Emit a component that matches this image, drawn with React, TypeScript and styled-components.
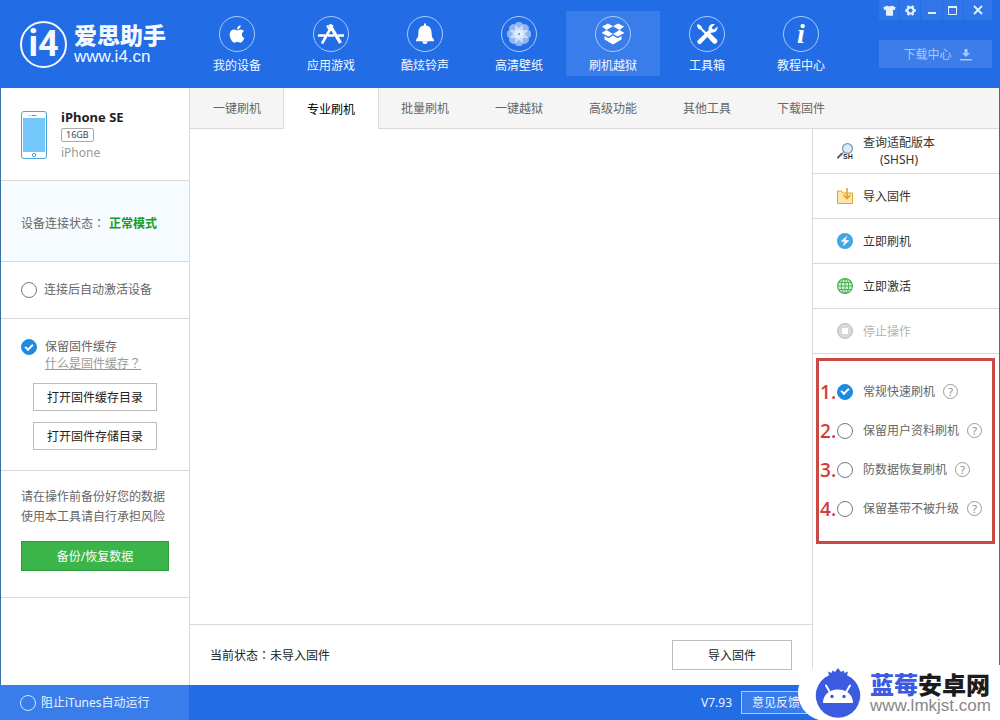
import React, { useState } from "react";
import styled, { createGlobalStyle, css } from "styled-components";
import { FaApple } from "react-icons/fa";

const uiFont = '"Noto Sans", "Noto Sans CJK SC", sans-serif';
const line = "#d9d9d9";
const brand = "#226ce6";

const GlobalStyle = createGlobalStyle`
  *, *::before, *::after { box-sizing: border-box; }
  body { margin: 0; font: 12px/16px ${uiFont}; color: #666; background: #fff; }
  button, input { font: inherit; color: inherit; margin: 0; padding: 0; }
  button { cursor: pointer; border: 0; background: none; }
  h1, p, fieldset { margin: 0; padding: 0; }
  svg { display: block; }
`;

const Window = styled.div`
  position: relative;
  min-height: 100vh;
  display: flex;
  flex-direction: column;
  overflow: hidden;
`;

/* Full-width punctuation set in the middle of its square */
const Punct = styled.span`
  font-family: "Noto Sans CJK TC", sans-serif;
`;

/* ---------- header ---------- */

const Header = styled.header`
  display: flex;
  align-items: flex-start;
  height: 88px;
  background: ${brand};
  color: #f4f9ff;
`;

const Brand = styled.div`
  display: flex;
  align-items: center;
  gap: 7px;
  flex: 0 0 190px;
  height: 88px;
  padding-left: 20px;
`;

const Emblem = styled.span`
  display: flex;
  align-items: center;
  justify-content: center;
  width: 47px;
  height: 47px;
  border: 2px solid #f4f9ff;
  border-radius: 50%;
  font: 700 36px/40px "Liberation Sans Narrow", Roboto, sans-serif;
`;

const BrandText = styled.div`
  display: flex;
  flex-direction: column;
  gap: 2px;
`;

const BrandName = styled.h1`
  font: 900 23px/24px "Noto Sans CJK SC", sans-serif;
`;

const BrandUrl = styled.p`
  font: 17px/18px "Liberation Sans", sans-serif;
`;

const Nav = styled.nav`
  display: flex;
  padding-top: 11px;
`;

const NavButton = styled.button<{ $active?: boolean }>`
  display: flex;
  flex-direction: column;
  align-items: center;
  gap: 6px;
  width: 94px;
  height: 65px;
  padding-top: 5px;
  background: ${(p) => (p.$active ? "#397dea" : "transparent")};
`;

const NavIcon = styled.span`
  display: flex;
  align-items: center;
  justify-content: center;
  width: 36px;
  height: 36px;
  border: 1px solid #a9cbfa;
  border-radius: 50%;
  color: #fff;
`;

const InfoMark = styled.span`
  font: italic 700 28px/28px "Liberation Serif", serif;
`;

const HeaderSide = styled.div`
  display: flex;
  flex-direction: column;
  gap: 20px;
  width: 113px;
  margin: 0 8px 0 auto;
`;

const WindowButtons = styled.div`
  display: flex;
  gap: 1px;
  height: 20px;
`;

const WindowButton = styled.button`
  display: flex;
  flex: 1 0 20px;
  align-items: center;
  justify-content: center;
  background: #3076e8;
  color: #e6f1ff;
  &:last-child { flex-basis: 28px; }
`;

const DownloadButton = styled.button`
  display: flex;
  align-items: center;
  justify-content: center;
  gap: 8px;
  height: 28px;
  padding: 2px 0 0 4px;
  background: #3c7de9;
  color: #a9c9f8;
`;

/* ---------- body ---------- */

const Body = styled.div`
  display: flex;
  flex: 1;
  border: solid #3a6ea8;
  border-width: 0 1px;
`;

const Sidebar = styled.aside`
  flex: 0 0 189px;
  border-right: 1px solid ${line};
`;

const Section = styled.section<{ $height: number; $tinted?: boolean; $top?: number; $bottom?: number }>`
  display: flex;
  flex-direction: column;
  justify-content: center;
  min-height: ${(p) => p.$height}px;
  padding: ${(p) => p.$top ?? 0}px 20px ${(p) => p.$bottom ?? 0}px;
  border-bottom: 1px solid ${line};
  background: ${(p) => (p.$tinted ? "#f5fbff" : "#fff")};
`;

const Device = styled.div`
  display: flex;
  align-items: center;
  gap: 14px;
`;

const DeviceInfo = styled.div`
  display: flex;
  flex-direction: column;
  align-items: flex-start;
  gap: 3px;
`;

const DeviceName = styled.strong`
  color: #222;
  font-size: 13px;
`;

const Capacity = styled.span`
  padding: 0 4px;
  border: 1px solid #aaa;
  border-radius: 2px;
  font-size: 9px;
  line-height: 12px;
  color: #444;
`;

const Muted = styled.span`
  color: #999;
`;

const Mode = styled.strong`
  margin-left: 4px;
  color: #159a2b;
`;

const Choice = styled.label<{ $gap?: number }>`
  display: flex;
  align-items: center;
  gap: ${(p) => p.$gap ?? 7}px;
  cursor: pointer;
`;

const Tick = styled.input<{ $onBlue?: boolean }>`
  appearance: none;
  display: grid;
  place-content: center;
  flex: none;
  width: 16px;
  height: 16px;
  border: 1px solid ${(p) => (p.$onBlue ? "#d5e6ff" : "#777")};
  border-radius: 50%;
  &:checked {
    border-color: #1f8ae0;
    background: #1f8ae0;
  }
  &:checked::after {
    content: "";
    width: 8px;
    height: 5px;
    margin-bottom: 2px;
    border: solid #fff;
    border-width: 0 0 2px 2px;
    transform: rotate(-45deg);
  }
`;

const HelpLink = styled.a`
  align-self: flex-start;
  margin-left: 24px;
  color: #999;
`;

const ButtonStack = styled.div`
  display: flex;
  flex-direction: column;
  gap: 11px;
  padding: 11px 12px 0;
`;

const OutlineButton = styled.button<{ $wide?: boolean }>`
  height: ${(p) => (p.$wide ? 30 : 28)}px;
  width: ${(p) => (p.$wide ? "120px" : "100%")};
  padding-top: 2px;
  border: 1px solid #bcbcbc;
  background: #fff;
  color: #222;
`;

const Notice = styled.p`
  line-height: 20px;
  white-space: nowrap;
`;

const GreenButton = styled.button`
  height: 30px;
  margin-top: 14px;
  padding-top: 2px;
  border: 1px solid #2f9e3d;
  background: #3bb54a;
  color: #fff;
`;

const Content = styled.div`
  display: flex;
  flex: 1;
  flex-direction: column;
  min-width: 0;
`;

const Tabs = styled.div`
  display: flex;
  height: 41px;
  border-bottom: 1px solid ${line};
  background: #f5f5f5;
`;

const Tab = styled.button<{ $active?: boolean }>`
  width: 94px;
  height: 40px;
  padding-top: 2px;
  ${(p) =>
    p.$active &&
    css`
      width: 96px;
      height: 41px;
      margin: 0 -1px;
      border: solid ${line};
      border-width: 0 1px;
      background: #fff;
      color: #000;
    `}
`;

const Workspace = styled.div`
  display: flex;
  flex: 1;
`;

const Main = styled.main`
  display: flex;
  flex: 1;
  flex-direction: column;
  justify-content: flex-end;
`;

const StatusBar = styled.div`
  display: flex;
  align-items: center;
  justify-content: space-between;
  height: 61px;
  padding: 0 20px;
  border-top: 1px solid ${line};
  color: #222;
`;

const Tools = styled.aside`
  flex: 0 0 187px;
  border-left: 1px solid ${line};
`;

const ToolButton = styled.button`
  display: flex;
  align-items: center;
  gap: 10px;
  width: 100%;
  height: 45px;
  padding-left: 24px;
  border-bottom: 1px solid ${line};
  color: #333;
  line-height: 17px;
  &:disabled { color: #b5b5b5; }
  svg { flex: none; }
`;

const Modes = styled.fieldset`
  margin: 4px 4px 0 3px;
  padding: 11px 0 13px 1px;
  border: 3px solid #c94a45;
`;

const ModeRow = styled.div`
  display: flex;
  align-items: center;
  height: 39px;
`;

const Step = styled.span`
  width: 17px;
  color: #d63a40;
  font: 600 19px/20px "Open Sans", sans-serif;
`;

const HelpButton = styled.button`
  display: flex;
  align-items: center;
  justify-content: center;
  width: 15px;
  height: 15px;
  margin-left: 8px;
  border: 1px solid #999;
  border-radius: 50%;
  color: #888;
  font-size: 11px;
  line-height: 13px;
`;

/* ---------- footer ---------- */

const Footer = styled.footer`
  display: flex;
  height: 35px;
  background: ${brand};
  color: #eaf3ff;
`;

const FooterSide = styled.div`
  display: flex;
  flex: 0 0 189px;
  align-items: center;
  padding-left: 20px;
  background: #397dea;
`;

const FooterMain = styled.div`
  display: flex;
  flex: 1;
  align-items: center;
  justify-content: flex-end;
  gap: 9px;
  padding-right: 189px;
`;

const FeedbackButton = styled.button`
  width: 70px;
  height: 23px;
  border: 1px solid #a9cbfa;
  background: #397dea;
`;

const Watermark = styled.div`
  position: absolute;
  right: 0;
  bottom: -1px;
  display: flex;
  align-items: center;
  gap: 9px;
  width: 202px;
  height: 56px;
  padding-left: 17px;
  border-radius: 28px 0 0 28px;
  background: #fff;
`;

const SiteName = styled.div`
  color: #1c1c20;
  font: 900 24px/26px "Noto Sans CJK SC", sans-serif;
  white-space: nowrap;
`;

const SiteAccent = styled.span`
  color: #3c5be0;
`;

const SiteUrl = styled.div`
  color: #888;
  font: 17px/18px "Liberation Sans", sans-serif;
`;

/* ---------- drawings ---------- */

const AppsIcon = () => (
  <svg width="26" height="22" viewBox="0 0 26 22" fill="none" stroke="#fff">
    <path d="M14.5 2 4 20.5" strokeWidth="2.6" />
    <path d="M11.5 1.5 22.5 20" strokeWidth="3.4" />
    <path d="M0 12.5h7M10 12.5h6M20 12.5h6" strokeWidth="2.6" />
    <path d="m9 2.5 2 3.5" strokeWidth="2" />
  </svg>
);

const BellIcon = () => (
  <svg width="20" height="22" viewBox="0 0 20 22" fill="#fff">
    <path d="M9 1.2a1 1 0 0 1 2 0v1.2c4 .6 5.6 3.6 5.6 7.2 0 3.6.5 5.4 2.4 7.2v1.500H1v-1.500c1.900-1.800 2.400-3.600 2.400-7.200C3.400 6 5 3 9 2.400zM7.500 18.500h5c0 1.800-1 2.500-2.500 2.500s-2.500-.7-2.500-2.500z" />
  </svg>
);

const FlowerIcon = () => (
  <svg width="26" height="26" viewBox="0 0 26 26" fill="#fff" fillOpacity="0.5">
    {[0, 45, 90, 135, 180, 225, 270, 315].map((a) => (
      <rect key={a} x="9" y="1" width="8" height="11.500" rx="3.500" transform={`rotate(${a} 13 13)`} />
    ))}
    <circle cx="13" cy="13" r="1" fill={brand} />
  </svg>
);

const BoxIcon = () => (
  <svg width="24" height="22" viewBox="0 0 24 22" fill="#fff">
    <path d="M7 .5 12 3.300 5.500 7 1 3.500zM17 .5 12 3.300 18.500 7 23 3.500z" />
    <path d="M5.500 7 12 11 7.500 13.500 .5 10zM18.500 7 12 11l4.500 2.500 7-3.500z" />
    <path d="M3.500 13v3.500L12 21.500l8.500-5V13l-4 2.200L12 12.500l-4.500 2.700z" />
  </svg>
);

const ToolsIcon = () => (
  <svg width="22" height="22" viewBox="0 0 22 22" fill="#fff">
    <path d="M2.200 1 5.500 3.200l.5 1.900 5 5-1.500 1.500-5-5-2-.6L.8 2.500z" />
    <path d="m12.200 11.800 2.300-1.300 6 5.800a2.500 2.500 0 0 1-3.600 3.600l-5.600-6z" />
    <path d="M19 1.300 15.900 4.300l.5 1.800 1.900.5 3-3.100c.9 3.400-1.900 6.700-5.700 5.900L5.300 20.300a2.200 2.200 0 0 1-3.300-3.100L12.700 7C11.800 3.200 15.300.2 19 1.300z" />
  </svg>
);

const ShirtIcon = () => (
  <svg width="13" height="11" viewBox="0 0 13 11" fill="currentColor">
    <path d="M4 .5c1 1.200 4 1.200 5 0l3.800 2L11.500 5.300 10 4.800v6H3v-6l-1.500.5L.2 2.500z" />
  </svg>
);

const GearIcon = () => (
  <svg width="11" height="11" viewBox="0 0 11 11" fill="none" stroke="currentColor">
    <circle cx="5.500" cy="5.500" r="3.100" strokeWidth="2" />
    {[30, 90, 150, 210, 270, 330].map((a) => (
      <path key={a} d="M5.500 2V.2" strokeWidth="2.600" transform={`rotate(${a} 5.500 5.500)`} />
    ))}
  </svg>
);

const MinimizeIcon = () => (
  <svg width="10" height="10" viewBox="0 0 10 10" stroke="currentColor" strokeWidth="2">
    <path d="M1 8h8" />
  </svg>
);

const MaximizeIcon = () => (
  <svg width="9" height="9" viewBox="0 0 9 9" fill="none" stroke="currentColor">
    <path d="M.5 1v7.500h8V1" />
    <path d="M0 1h9" strokeWidth="2" />
  </svg>
);

const CloseIcon = () => (
  <svg width="10" height="10" viewBox="0 0 10 10" stroke="currentColor" strokeWidth="1.800">
    <path d="m1 1 8 8M9 1 1 9" />
  </svg>
);

const DownloadIcon = () => (
  <svg width="12" height="12" viewBox="0 0 12 12" fill="currentColor">
    <path d="M4.500 0h3v4H10L6 8 2 4h2.500zM0 10h12v1.500H0z" />
  </svg>
);

const PhoneIcon = () => (
  <svg width="26" height="48" viewBox="0 0 26 48" fill="none" stroke="#4aa6d4">
    <rect x=".5" y=".5" width="25" height="47" rx="2.500" fill="#fff" />
    <rect x="2" y="7" width="22" height="34" fill="#74c7fb" stroke="none" />
    <path d="M8 4.500h1M10.500 4.500h5" />
    <circle cx="13" cy="44" r="1.700" />
  </svg>
);

const SearchIcon = () => (
  <svg width="16" height="17" viewBox="0 0 16 17" fill="none" overflow="visible">
    <circle cx="10.500" cy="5.500" r="4.900" fill="#d8ecfb" stroke="#8397aa" strokeWidth="1.200" />
    <path d="M6.500 9.500 4.300 11.200" stroke="#7b8896" strokeWidth="1.400" />
    <path d="M4.500 11 1 14.500" stroke="#5b6672" strokeWidth="2.200" strokeLinecap="round" />
    <text x="6" y="16" fontSize="7" fontFamily="Liberation Sans" fontWeight="700" fill="#333">SH</text>
  </svg>
);

const ImportIcon = () => (
  <svg width="16" height="16" viewBox="0 0 16 16" fill="none" stroke="#dda52c">
    <path d="M.5 3h4l1.500 2h9.500v10.500H.5z" fill="#fde6a9" />
    <path d="M10 0v10M6.500 7l3.500 3.500L13.500 7" strokeWidth="1.600" />
  </svg>
);

const BoltIcon = () => (
  <svg width="16" height="16" viewBox="0 0 16 16">
    <circle cx="8" cy="8" r="8" fill="#41a6e4" />
    <path d="M10.500 2.500 3.500 8.500l4 .3L5.500 13.500l7-6-4-.5z" fill="#fff" />
  </svg>
);

const GlobeIcon = () => (
  <svg width="16" height="16" viewBox="0 0 16 16" fill="none" stroke="#4cae59">
    <circle cx="8" cy="8" r="7.400" fill="#d3f3d4" strokeWidth="1.200" />
    <ellipse cx="8" cy="8" rx="3.700" ry="7.300" />
    <path d="M8 .5v15M.5 8h15M1.800 4.500h12.400M1.800 11.500h12.400" />
  </svg>
);

const StopIcon = () => (
  <svg width="16" height="16" viewBox="0 0 16 16">
    <circle cx="8" cy="8" r="7.500" fill="#d8d8d8" stroke="#bcbcbc" />
    <rect x="5" y="5" width="6" height="6" fill="#fff" />
  </svg>
);

const BlueberryIcon = () => (
  <svg width="46" height="50" viewBox="0 0 46 50">
    <path
      d="M23 0 26 4 28.500 2.500 29.500 5 33 3.500 32 7.200A22.200 22.200 0 1 1 14 7.200L13 3.500 16.500 5 17.500 2.500 20 4z"
      fill="#3c5be0"
    />
    <path d="M8 35c0-8 6-13.500 15-13.500S38 27 38 35z" fill="#fff" />
    <path d="m14.500 23.500-3.500-6M31.500 23.500l3.500-6" stroke="#fff" strokeWidth="2" strokeLinecap="round" />
    <circle cx="17" cy="28.500" r="1.700" fill="#3c5be0" />
    <circle cx="29" cy="28.500" r="1.700" fill="#3c5be0" />
  </svg>
);

/* ---------- data ---------- */

const navItems = [
  { label: "我的设备", icon: <FaApple size={20} /> },
  { label: "应用游戏", icon: <AppsIcon /> },
  { label: "酷炫铃声", icon: <BellIcon /> },
  { label: "高清壁纸", icon: <FlowerIcon /> },
  { label: "刷机越狱", icon: <BoxIcon /> },
  { label: "工具箱", icon: <ToolsIcon /> },
  { label: "教程中心", icon: <InfoMark>i</InfoMark> },
];

const windowButtons = [
  { label: "皮肤", icon: <ShirtIcon /> },
  { label: "设置", icon: <GearIcon /> },
  { label: "最小化", icon: <MinimizeIcon /> },
  { label: "最大化", icon: <MaximizeIcon /> },
  { label: "关闭", icon: <CloseIcon /> },
];

const tabs = ["一键刷机", "专业刷机", "批量刷机", "一键越狱", "高级功能", "其他工具", "下载固件"];

const tools = [
  { label: <>查询适配版本<br />(SHSH)</>, icon: <SearchIcon /> },
  { label: "导入固件", icon: <ImportIcon /> },
  { label: "立即刷机", icon: <BoltIcon /> },
  { label: "立即激活", icon: <GlobeIcon /> },
  { label: "停止操作", icon: <StopIcon />, disabled: true },
];

const modes = ["常规快速刷机", "保留用户资料刷机", "防数据恢复刷机", "保留基带不被升级"];

export default function App() {
  const [nav, setNav] = useState(4);
  const [tab, setTab] = useState(1);
  const [mode, setMode] = useState(0);

  return (
    <Window>
      <GlobalStyle />
      <Header>
        <Brand>
          <Emblem>i4</Emblem>
          <BrandText>
            <BrandName>爱思助手</BrandName>
            <BrandUrl>www.i4.cn</BrandUrl>
          </BrandText>
        </Brand>
        <Nav>
          {navItems.map((item, i) => (
            <NavButton key={item.label} $active={i === nav} onClick={() => setNav(i)}>
              <NavIcon>{item.icon}</NavIcon>
              {item.label}
            </NavButton>
          ))}
        </Nav>
        <HeaderSide>
          <WindowButtons>
            {windowButtons.map((b) => (
              <WindowButton key={b.label} aria-label={b.label}>
                {b.icon}
              </WindowButton>
            ))}
          </WindowButtons>
          <DownloadButton>
            下载中心
            <DownloadIcon />
          </DownloadButton>
        </HeaderSide>
      </Header>

      <Body>
        <Sidebar>
          <Section $height={93} $top={2}>
            <Device>
              <PhoneIcon />
              <DeviceInfo>
                <DeviceName>iPhone SE</DeviceName>
                <Capacity>16GB</Capacity>
                <Muted>iPhone</Muted>
              </DeviceInfo>
            </Device>
          </Section>
          <Section $height={81} $tinted $top={4}>
            <p>
              设备连接状态<Punct>：</Punct>
              <Mode>正常模式</Mode>
            </p>
          </Section>
          <Section $height={57}>
            <Choice>
              <Tick type="checkbox" />
              连接后自动激活设备
            </Choice>
          </Section>
          <Section $height={152}>
            <Choice $gap={8}>
              <Tick type="checkbox" defaultChecked />
              保留固件缓存
            </Choice>
            <HelpLink href="#cache">
              什么是固件缓存<Punct>？</Punct>
            </HelpLink>
            <ButtonStack>
              <OutlineButton>打开固件缓存目录</OutlineButton>
              <OutlineButton>打开固件存储目录</OutlineButton>
            </ButtonStack>
          </Section>
          <Section $height={127} $bottom={10}>
            <Notice>
              请在操作前备份好您的数据
              <br />
              使用本工具请自行承担风险
            </Notice>
            <GreenButton>备份/恢复数据</GreenButton>
          </Section>
        </Sidebar>

        <Content>
          <Tabs>
            {tabs.map((t, i) => (
              <Tab key={t} $active={i === tab} onClick={() => setTab(i)}>
                {t}
              </Tab>
            ))}
          </Tabs>
          <Workspace>
            <Main>
              <StatusBar>
                <span>
                  当前状态<Punct>：</Punct>未导入固件
                </span>
                <OutlineButton $wide>导入固件</OutlineButton>
              </StatusBar>
            </Main>
            <Tools>
              {tools.map((t, i) => (
                <ToolButton key={i} disabled={t.disabled}>
                  {t.icon}
                  <span>{t.label}</span>
                </ToolButton>
              ))}
              <Modes aria-label="刷机模式">
                {modes.map((m, i) => (
                  <ModeRow key={m}>
                    <Step>{i + 1}.</Step>
                    <Choice $gap={10}>
                      <Tick type="radio" name="mode" checked={i === mode} onChange={() => setMode(i)} />
                      {m}
                    </Choice>
                    <HelpButton aria-label={`${m}说明`}>?</HelpButton>
                  </ModeRow>
                ))}
              </Modes>
            </Tools>
          </Workspace>
        </Content>
      </Body>

      <Footer>
        <FooterSide>
          <Choice $gap={5}>
            <Tick type="checkbox" $onBlue />
            阻止iTunes自动运行
          </Choice>
        </FooterSide>
        <FooterMain>
          <span>V7.93</span>
          <FeedbackButton>意见反馈</FeedbackButton>
        </FooterMain>
      </Footer>

      <Watermark>
        <BlueberryIcon />
        <div>
          <SiteName>
            <SiteAccent>蓝莓</SiteAccent>安卓网
          </SiteName>
          <SiteUrl>www.lmkjst.com</SiteUrl>
        </div>
      </Watermark>
    </Window>
  );
}
